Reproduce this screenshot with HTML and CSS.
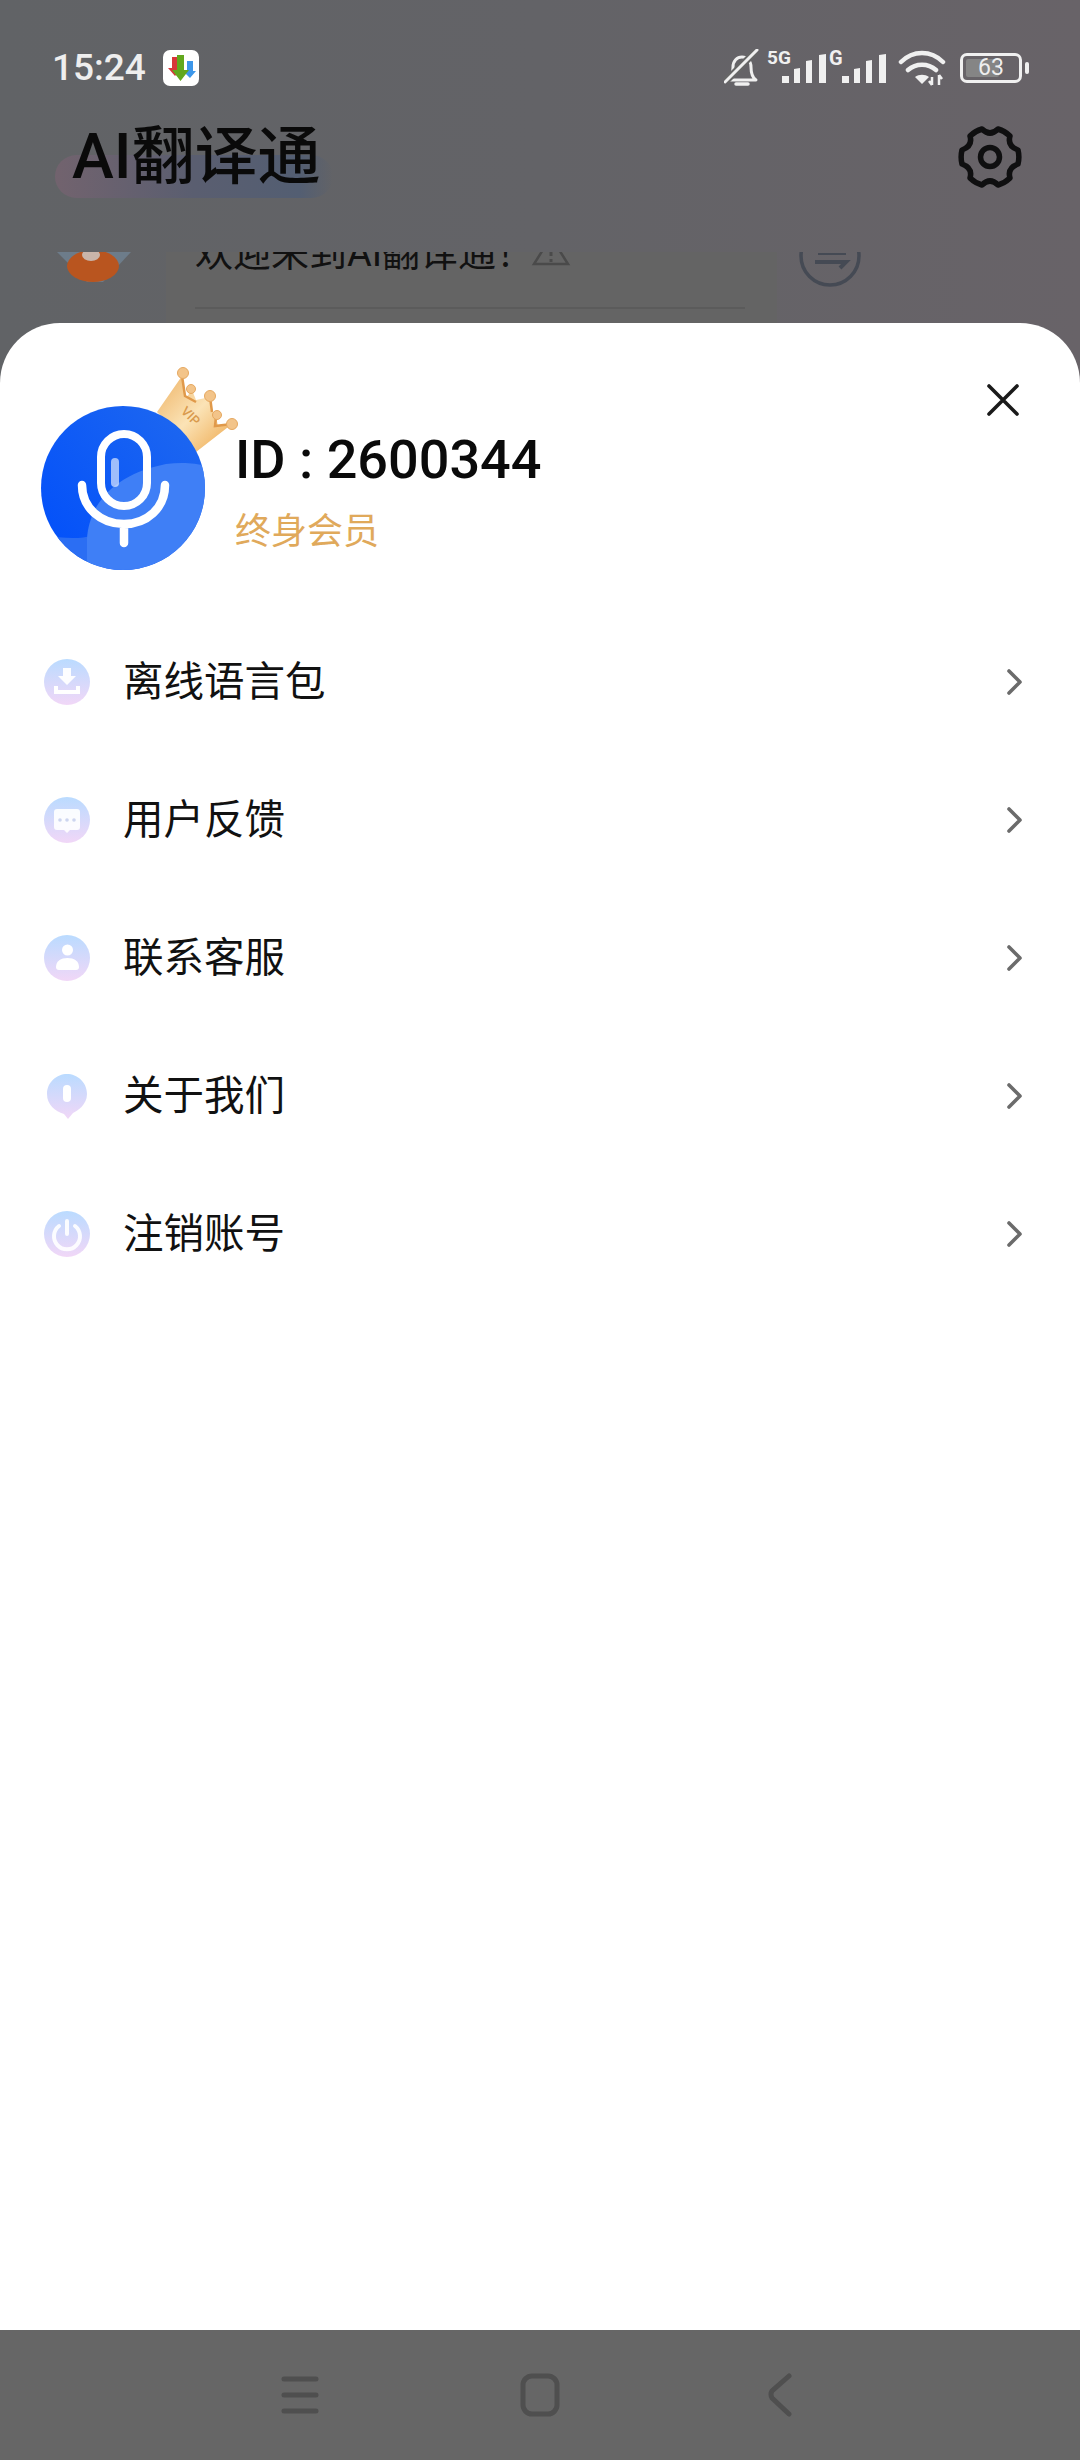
FILE: index.html
```html
<!DOCTYPE html>
<html lang="zh">
<head>
<meta charset="utf-8">
<title>AI翻译通</title>
<link rel="stylesheet" href="styles.css">
</head>
<body>
<div class="app">
  <div class="backdrop">
    <div class="status">
      <span class="time">15:24</span>
      <svg class="appicon" viewBox="0 0 36 36" width="36" height="36">
        <rect width="36" height="36" rx="7" fill="#fff"/>
        <path d="M9 7h6v11h4l-7 8-7-8h4z" fill="#d8363a"/>
        <path d="M24 11h6v10h3l-6 7-7-7h4z" fill="#3d97ea"/>
        <path d="M14 5h7v15h5l-8.500 11-8.500-11h5z" fill="#62a81e"/>
      </svg>
      <div class="status-right">
        <svg viewBox="0 0 36 38" width="36" height="38" class="ic-bell">
          <path d="M4 31c3-2 5-5 5-13 0-6 4-10 9-10s9 4 9 10c0 8 2 11 5 13z" fill="none" stroke="#f0f0f0" stroke-width="3" stroke-linejoin="round"/>
          <path d="M12 35h12" stroke="#f0f0f0" stroke-width="3.500" stroke-linecap="round"/>
          <path d="M2 32L32 2" stroke="#666" stroke-width="7"/>
          <path d="M1 33L33 1" stroke="#f0f0f0" stroke-width="3" stroke-linecap="round"/>
        </svg>
        <div class="signal sig-a">
          <span class="net">5G</span>
          <svg viewBox="0 0 44 30" width="44" height="30"><path d="M0 22h7v7H0zM12 15l6-1v15h-6zM24 7l6-1v23h-6zM37 1l7-1v29h-7z" fill="#f0f0f0"/></svg>
        </div>
        <div class="signal sig-b">
          <span class="net">G</span>
          <svg viewBox="0 0 44 30" width="44" height="30"><path d="M0 22h7v7H0zM12 15l6-1v15h-6zM24 7l6-1v23h-6zM37 1l7-1v29h-7z" fill="#f0f0f0"/></svg>
        </div>
        <svg viewBox="0 0 48 36" width="48" height="36" class="ic-wifi">
          <path d="M3 12C15 0 33 0 45 12M10 20c8-7 20-7 28 0" fill="none" stroke="#f0f0f0" stroke-width="4.500" stroke-linecap="round"/>
          <path d="M17 27c4-3 10-3 14 0l-7 7z" fill="#f0f0f0"/>
          <path d="M34 27v8M41 25v10M31 31l3 4M44 29l-3-4" fill="none" stroke="#f0f0f0" stroke-width="2.500"/>
        </svg>
        <div class="battery"><span class="batt-fill"></span><span class="batt-num">63</span><span class="batt-tip"></span></div>
      </div>
    </div>
    <div class="appbar">
      <h1 class="title">AI翻译通</h1>
      <svg class="gear" viewBox="-32 -32 64 64" width="64" height="64">
        <path d="M28 -7A29 29 0 0 1 28 7Q17 11 20 21A29 29 0 0 1 8 28Q0 20 -8 28A29 29 0 0 1 -20 21Q-17 11 -28 7A29 29 0 0 1 -28 -7Q-17 -11 -20 -21A29 29 0 0 1 -8 -28Q0 -20 8 -28A29 29 0 0 1 20 -21Q17 -11 28 -7Z" fill="none" stroke="#0f0f10" stroke-width="5.500" stroke-linejoin="round"/>
        <circle r="9.500" fill="none" stroke="#0f0f10" stroke-width="5.500"/>
      </svg>
    </div>
    <div class="chat">
      <div class="chat-avatar">
        <svg viewBox="0 0 74 34" width="74" height="34">
          <path d="M0 0h74L46 30H30z" fill="#6d7c8a"/>
          <ellipse cx="36" cy="14" rx="26" ry="16" fill="#b9551f"/>
          <ellipse cx="34" cy="3" rx="9" ry="6" fill="#c9b5aa"/>
        </svg>
      </div>
      <div class="bubble">
        <div class="bubble-text">
          <span class="greet">欢迎来到AI翻译通！</span>
          <svg viewBox="0 0 40 34" width="40" height="34" class="warn">
            <path d="M20 3L37 30H3z" fill="none" stroke="#4a4a4a" stroke-width="2.500"/>
            <path d="M20 12v10M20 25v3" stroke="#4a4a4a" stroke-width="3"/>
          </svg>
        </div>
        <div class="bubble-rule"></div>
      </div>
      <svg class="swap" viewBox="0 0 64 64" width="64" height="64">
        <circle cx="32" cy="32" r="29" fill="none" stroke="#454a54" stroke-width="3.500"/>
        <path d="M20 30h28" fill="none" stroke="#454a54" stroke-width="2"/>
        <path d="M17 38h31l-6 6" fill="none" stroke="#454a54" stroke-width="4"/>
      </svg>
    </div>
  </div>

  <main class="sheet">
    <svg class="close" viewBox="0 0 34 34" width="34" height="34"><path d="M3 3L31 31M31 3L3 31" stroke="#1a1a1a" stroke-width="3.600" stroke-linecap="round"/></svg>
    <svg class="crown" viewBox="0 0 90 90" width="90" height="90">
      <defs>
        <linearGradient id="cg" x1="0" y1="0" x2="1" y2="1">
          <stop offset="0" stop-color="#eeb264"/>
          <stop offset=".5" stop-color="#fbe3b6"/>
          <stop offset="1" stop-color="#eda548"/>
        </linearGradient>
      </defs>
      <path d="M5 48L30 12L34 34L40 26L44 36L58 33L60 46L64 53L66 62L80 60L44 88Z" fill="url(#cg)"/>
      <path d="M30 12L33 32L44 38M58 33L60 48M64 53L63 62L80 60" fill="none" stroke="#e0994a" stroke-width="2.500"/>
      <g fill="#f3c489" stroke="#e6a860" stroke-width="1">
        <circle cx="31" cy="9" r="5.500"/><circle cx="39" cy="25" r="4.500"/><circle cx="58" cy="32" r="5.500"/><circle cx="65" cy="51" r="4.500"/><circle cx="80" cy="60" r="5.500"/>
      </g>
      <text x="29" y="54" class="vip" transform="rotate(45 36 50)">VIP</text>
    </svg>
    <header class="profile">
      <svg class="avatar" viewBox="0 0 164 164" width="164" height="164">
        <defs>
          <clipPath id="ac"><circle cx="82" cy="82" r="82"/></clipPath>
          <linearGradient id="ab" x1="1" y1="0" x2="0" y2=".85">
            <stop offset="0" stop-color="#2069ef"/>
            <stop offset="1" stop-color="#0250fa"/>
          </linearGradient>
        </defs>
        <g clip-path="url(#ac)">
          <rect width="164" height="164" fill="url(#ab)"/>
          <path d="M0 128C20 133 40 133 50 130L46 164H0z" fill="#2b6ef3"/>
          <path d="M46 132C48 105 65 70 125 58C140 56 155 57 164 60V164H46z" fill="#3f7ff6"/>
        </g>
        <rect x="60" y="28" width="46" height="72" rx="23" fill="none" stroke="#fff" stroke-width="8"/>
        <rect x="70" y="52" width="8" height="29" rx="4" fill="#fff" fill-opacity=".6"/>
        <path d="M41 79C41 102 60 118 83 118S124 102 124 79M83 118V137" fill="none" stroke="#fff" stroke-width="8.500" stroke-linecap="round"/>
      </svg>
      <div class="who">
        <div class="uid">ID : 2600344</div>
        <div class="tier">终身会员</div>
      </div>
    </header>
    <nav class="menu">
      <a class="row">
        <svg class="mi" viewBox="0 0 46 46" width="46" height="46"><use href="#disc"/>
          <path d="M19 9h8v8h5l-9 9-9-9h5z" fill="#fff" fill-opacity=".95"/><path d="M12 27v6h22v-6" fill="none" stroke="#fff" stroke-width="4"/>
        </svg>
        <span class="label">离线语言包</span>
        <svg class="chev" viewBox="0 0 18 28" width="18" height="28"><path d="M3 3L14 14L3 25" fill="none" stroke="#6b6b6b" stroke-width="3.600" stroke-linecap="round" stroke-linejoin="round"/></svg>
      </a>
      <a class="row">
        <svg class="mi" viewBox="0 0 46 46" width="46" height="46"><use href="#disc"/>
          <path d="M13 12h20a3 3 0 0 1 3 3v15a3 3 0 0 1-3 3h-7l-3 3-3-3h-7a3 3 0 0 1-3-3V15a3 3 0 0 1 3-3z" fill="#fff" fill-opacity=".9"/>
          <g fill="#cdd5ef"><circle cx="16" cy="23" r="1.800"/><circle cx="23" cy="23" r="1.800"/><circle cx="30" cy="23" r="1.800"/></g>
        </svg>
        <span class="label">用户反馈</span>
        <svg class="chev" viewBox="0 0 18 28" width="18" height="28"><path d="M3 3L14 14L3 25" fill="none" stroke="#6b6b6b" stroke-width="3.600" stroke-linecap="round" stroke-linejoin="round"/></svg>
      </a>
      <a class="row">
        <svg class="mi" viewBox="0 0 46 46" width="46" height="46"><use href="#disc"/>
          <circle cx="23.500" cy="15" r="5.500" fill="#fff"/><path d="M12 32c0-6 5-9 11.500-9S35 26 35 32c0 2-1 3-3 3H15c-2 0-3-1-3-3z" fill="#fff"/>
        </svg>
        <span class="label">联系客服</span>
        <svg class="chev" viewBox="0 0 18 28" width="18" height="28"><path d="M3 3L14 14L3 25" fill="none" stroke="#6b6b6b" stroke-width="3.600" stroke-linecap="round" stroke-linejoin="round"/></svg>
      </a>
      <a class="row">
        <svg class="mi" viewBox="0 0 46 46" width="46" height="46">
          <path d="M23 1C33 1 43 9 43 21C43 32 33 38 29 40L24 46L20 41C11 38 3 32 3 21C3 9 13 1 23 1z" fill="url(#dg)"/>
          <rect x="19" y="12" width="8" height="17" rx="4" fill="#fff"/>
        </svg>
        <span class="label">关于我们</span>
        <svg class="chev" viewBox="0 0 18 28" width="18" height="28"><path d="M3 3L14 14L3 25" fill="none" stroke="#6b6b6b" stroke-width="3.600" stroke-linecap="round" stroke-linejoin="round"/></svg>
      </a>
      <a class="row">
        <svg class="mi" viewBox="0 0 46 46" width="46" height="46"><use href="#disc"/>
          <path d="M15 15a13 13 0 1 0 16 0" fill="none" stroke="#fff" stroke-opacity=".9" stroke-width="4" stroke-linecap="round"/><path d="M23 10v13" stroke="#fff" stroke-opacity=".9" stroke-width="4" stroke-linecap="round"/>
        </svg>
        <span class="label">注销账号</span>
        <svg class="chev" viewBox="0 0 18 28" width="18" height="28"><path d="M3 3L14 14L3 25" fill="none" stroke="#6b6b6b" stroke-width="3.600" stroke-linecap="round" stroke-linejoin="round"/></svg>
      </a>
    </nav>
  </main>

  <footer class="navbar">
    <svg viewBox="0 0 38 38" width="38" height="38"><path d="M3 3h32M3 19h32M3 35h32" stroke="#4f4f4f" stroke-width="5" stroke-linecap="round"/></svg>
    <svg viewBox="0 0 40 44" width="40" height="44"><rect x="3" y="3" width="34" height="38" rx="9" fill="none" stroke="#4f4f4f" stroke-width="5"/></svg>
    <svg viewBox="0 0 25 44" width="25" height="44"><path d="M21 3L4 18Q2 21 4 25L21 41" fill="none" stroke="#4f4f4f" stroke-width="5" stroke-linecap="round"/></svg>
  </footer>

  <svg class="defs" width="0" height="0">
    <defs>
      <linearGradient id="dg" x1="0" y1="0" x2="0" y2="1">
        <stop offset="0" stop-color="#badbff"/>
        <stop offset="1" stop-color="#f1d7f7"/>
      </linearGradient>
      <circle id="disc" cx="23" cy="23" r="23" fill="url(#dg)"/>
    </defs>
  </svg>
</div>
</body>
</html>
```
FILE: styles.css
```css
* { box-sizing: border-box; }
html, body { margin: 0; padding: 0; }
body {
  width: 1080px;
  height: 2460px;
  overflow: hidden;
  font-family: Roboto, "Noto Sans CJK SC", sans-serif;
  background: #666;
}
.app {
  width: 1080px;
  height: 2460px;
  display: flex;
  flex-direction: column;
  position: relative;
  overflow: hidden;
}
.defs { position: absolute; }

/* dimmed page behind the sheet */
.backdrop {
  height: 383px;
  margin-bottom: -60px;
  background: linear-gradient(90deg, #616366 0%, #636367 50%, #686368 100%);
  display: flex;
  flex-direction: column;
  flex: none;
}
.status {
  height: 36px;
  margin-top: 50px;
  padding: 0 58px 0 52px;
  display: flex;
  align-items: center;
  flex: none;
}
.time {
  font-size: 37px;
  font-weight: 500;
  color: #eeeeee;
  width: 92px;
  line-height: 36px;
  white-space: nowrap;
}
.appicon { margin-left: 19px; }
.status-right {
  margin-left: auto;
  display: flex;
  align-items: center;
  height: 36px;
}
.ic-bell { margin-right: 4px; }
.signal {
  position: relative;
  height: 36px;
  display: flex;
  justify-content: flex-end;
  align-items: flex-end;
  padding-bottom: 2px;
}
.sig-a { width: 62px; }
.sig-b { width: 60px; }
.net {
  position: absolute;
  left: 3px;
  top: -1px;
  font-size: 19px;
  line-height: 18px;
  font-weight: 700;
  color: #f0f0f0;
}
.sig-b .net { left: 3px; font-size: 20px; }
.ic-wifi { margin-left: 12px; }
.battery {
  position: relative;
  width: 62px;
  height: 30px;
  margin-left: 14px;
  border: 3px solid #f0f0f0;
  border-radius: 7px;
  display: flex;
  align-items: center;
  justify-content: center;
}
.batt-fill {
  position: absolute;
  left: 3px;
  top: 3px;
  bottom: 3px;
  width: 33px;
  background: #858585;
  border-radius: 2px;
}
.batt-num {
  position: relative;
  font-size: 23px;
  color: #eeeeee;
  line-height: 24px;
}
.batt-tip {
  position: absolute;
  right: -10px;
  top: 6px;
  width: 4px;
  height: 12px;
  background: #f0f0f0;
  border-radius: 2px;
}
.appbar {
  height: 64px;
  margin-top: 39px;
  padding: 0 58px 0 72px;
  display: flex;
  align-items: center;
  justify-content: space-between;
  flex: none;
}
.title {
  position: relative;
  z-index: 0;
  margin: 0;
  font-size: 63px;
  font-weight: 500;
  line-height: 64px;
  color: #0a0a0a;
  white-space: nowrap;
}
.title::before {
  content: "";
  position: absolute;
  z-index: -1;
  left: -17px;
  right: -12px;
  top: 30px;
  height: 43px;
  border-radius: 22px;
  background: linear-gradient(90deg, #72636e 0%, #5a5e70 50%, #535e72 88%, rgba(90, 96, 106, 0) 100%);
}
.chat {
  height: 71px;
  margin-top: 63px;
  padding-left: 57px;
  display: flex;
  align-items: flex-start;
  overflow: hidden;
  flex: none;
}
.chat-avatar { width: 74px; height: 34px; flex: none; }
.bubble {
  margin-left: 35px;
  width: 611px;
  height: 71px;
  background: #646464;
  padding: 0 32px 0 29px;
  flex: none;
}
.bubble-text {
  height: 56px;
  margin-top: -24px;
  display: flex;
  align-items: flex-start;
}
.greet {
  font-size: 38px;
  line-height: 50px;
  color: #111;
  white-space: nowrap;
}
.warn { margin-top: 6px; margin-left: -3px; }
.bubble-rule { height: 2px; margin-top: 23px; background: #5b5b5b; }
.swap { margin-left: 21px; margin-top: -28px; flex: none; }

/* bottom sheet */
.sheet {
  position: relative;
  flex: 1;
  background: #fff;
  border-radius: 60px 60px 0 0;
  padding-top: 83px;
}
.close { position: absolute; right: 60px; top: 60px; }
.crown { position: absolute; left: 152px; top: 41px; }
.vip { font-family: Roboto, sans-serif; font-size: 13px; font-weight: 500; fill: #d99a4e; }
.profile {
  position: relative;
  display: flex;
  align-items: flex-start;
  gap: 30px;
  padding-left: 41px;
}
.avatar { flex: none; display: block; }
.who { padding-top: 21px; }
.uid {
  font-size: 54px;
  font-weight: 500;
  line-height: 66px;
  color: #0a0a0a;
  white-space: nowrap;
}
.tier {
  margin-top: 11px;
  font-size: 36px;
  line-height: 48px;
  color: #e0a95b;
  font-family: "Noto Sans CJK SC", sans-serif;
}
.menu {
  margin-top: 43px;
  display: flex;
  flex-direction: column;
}
.row {
  height: 138px;
  padding: 0 56px 0 44px;
  display: flex;
  align-items: center;
  gap: 33px;
}
.mi { flex: none; }
.label {
  flex: 1;
  font-size: 40.500px;
  line-height: 56px;
  padding-bottom: 6px;
  box-sizing: content-box;
  color: #111;
  font-family: "Noto Sans CJK SC", sans-serif;
}
.chev { flex: none; }

.navbar {
  height: 130px;
  flex: none;
  background: #666;
  display: grid;
  grid-template-columns: repeat(3, 240px);
  justify-content: center;
  justify-items: center;
  align-items: center;
}
```
